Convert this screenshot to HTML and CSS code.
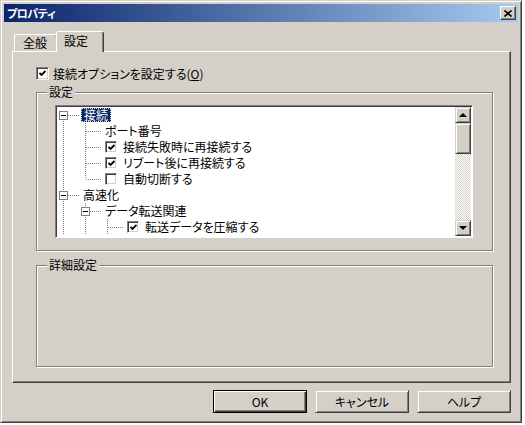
FILE: index.html
```html
<!DOCTYPE html>
<html lang="ja">
<head>
    <meta charset="UTF-8">
    <title>プロパティ</title>
    <link rel="stylesheet" href="styles.css">
</head>
<body>

<div class="window">
    <div class="titlebar">
        <span class="title">プロパティ</span>
        <button class="close">
            <svg width="8" height="7" viewBox="0 0 8 7"><path d="M0.5 0.5 L7.5 6.5 M7.5 0.5 L0.5 6.5" stroke="#000" stroke-width="1.7" fill="none"/></svg>
        </button>
    </div>

    <div class="client">
        <div class="tabs">
            <div class="tab">全般</div>
            <div class="tab active">設定</div>
        </div>

        <div class="panel">
            <label class="check-row">
                <span class="check"><svg width="7" height="7" viewBox="0 0 7 7"><polyline points="0.5,3 2.5,5 6.5,1" stroke="#000" stroke-width="1.8" fill="none"/></svg></span>
                <span>接続オプションを設定する(<u>O</u>)</span>
            </label>

            <div class="group">
                <div class="group-title">設定</div>
                <div class="tree">
                    <div class="tree-rows">
                        <div class="row">
                            <span class="node down"><span class="expander"></span></span>
                            <span class="label selected">接続</span>
                        </div>
                        <div class="row">
                            <span class="guide pipe"></span>
                            <span class="node full"></span>
                            <span class="label">ポート番号</span>
                        </div>
                        <div class="row">
                            <span class="guide pipe"></span>
                            <span class="node full"></span>
                            <span class="tick"><svg width="7" height="7" viewBox="0 0 7 7"><polyline points="0.5,3 2.5,5 6.5,1" stroke="#000" stroke-width="1.8" fill="none"/></svg></span>
                            <span class="label">接続失敗時に再接続する</span>
                        </div>
                        <div class="row">
                            <span class="guide pipe"></span>
                            <span class="node full"></span>
                            <span class="tick"><svg width="7" height="7" viewBox="0 0 7 7"><polyline points="0.5,3 2.5,5 6.5,1" stroke="#000" stroke-width="1.8" fill="none"/></svg></span>
                            <span class="label">リブート後に再接続する</span>
                        </div>
                        <div class="row">
                            <span class="guide pipe"></span>
                            <span class="node up"></span>
                            <span class="tick"></span>
                            <span class="label">自動切断する</span>
                        </div>
                        <div class="row">
                            <span class="node full"><span class="expander"></span></span>
                            <span class="label">高速化</span>
                        </div>
                        <div class="row">
                            <span class="guide pipe"></span>
                            <span class="node full"><span class="expander"></span></span>
                            <span class="label">データ転送関連</span>
                        </div>
                        <div class="row">
                            <span class="guide pipe"></span>
                            <span class="guide pipe"></span>
                            <span class="node full"></span>
                            <span class="tick"><svg width="7" height="7" viewBox="0 0 7 7"><polyline points="0.5,3 2.5,5 6.5,1" stroke="#000" stroke-width="1.8" fill="none"/></svg></span>
                            <span class="label">転送データを圧縮する</span>
                        </div>
                    </div>
                    <div class="vscroll">
                        <div class="sb-btn"><span class="arrow-up"></span></div>
                        <div class="sb-thumb"></div>
                        <div class="sb-track"></div>
                        <div class="sb-btn"><span class="arrow-down"></span></div>
                    </div>
                </div>
            </div>

            <div class="group detail">
                <div class="group-title">詳細設定</div>
            </div>
        </div>

        <div class="buttons">
            <button class="btn default">OK</button>
            <button class="btn">キャンセル</button>
            <button class="btn">ヘルプ</button>
        </div>
    </div>
</div>

</body>
</html>
```

FILE: styles.css
```css
* {
    box-sizing: border-box;
}

body {
    margin: 0;
    background-color: #ffffff;
    font-family: "Noto Sans CJK JP", sans-serif;
    font-size: 12px;
    font-feature-settings: "palt";
    color: #000;
}

.window {
    width: 522px;
    height: 423px;
    background-color: #d4d0c8;
    border: 1px solid;
    border-color: #d4d0c8 #404040 #404040 #d4d0c8;
    box-shadow: inset 1px 1px #ffffff, inset -1px -1px #808080;
    padding: 3px;
}

.titlebar {
    height: 18px;
    display: flex;
    align-items: center;
    justify-content: space-between;
    padding: 0 2px 0 3px;
    background: linear-gradient(to right, #0a246a, #a6caf0);
}

.title {
    color: #ffffff;
    font-weight: bold;
    font-size: 11px;
    letter-spacing: -0.5px;
}

.close {
    width: 16px;
    height: 14px;
    padding: 0;
    display: flex;
    align-items: center;
    justify-content: center;
    background-color: #d4d0c8;
    border: 1px solid;
    border-color: #ffffff #404040 #404040 #ffffff;
    box-shadow: inset -1px -1px #808080;
}

.client {
    padding: 9px 7px 0 8px;
}

/* tabs */
.tabs {
    display: flex;
    align-items: flex-end;
    height: 20px;
    padding-left: 2px;
    position: relative;
    z-index: 1;
}

.tab {
    width: 44px;
    height: 17px;
    padding-left: 8px;
    line-height: 16px;
    background-color: #d4d0c8;
    border: 1px solid;
    border-bottom: 0;
    border-color: #ffffff #404040 transparent #ffffff;
    border-radius: 3px 3px 0 0;
    box-shadow: inset -1px 0 #808080;
}

.tab.active {
    width: 48px;
    height: 21px;
    margin: 0 -2px -1px;
    padding-left: 7px;
    line-height: 17px;
}

.panel {
    width: 499px;
    height: 332px;
    border: 1px solid;
    border-color: #ffffff #404040 #404040 #ffffff;
    box-shadow: inset -1px -1px #808080;
    padding: 15px 0 0 23px;
}

.check-row {
    display: flex;
    align-items: center;
    gap: 4px;
    height: 13px;
}

.check, .tick {
    flex: none;
    width: 13px;
    height: 13px;
    display: flex;
    align-items: center;
    justify-content: center;
    background-color: #ffffff;
    border: 1px solid;
    border-color: #808080 #ffffff #ffffff #808080;
    box-shadow: inset 1px 1px #404040, inset -1px -1px #d4d0c8;
}

/* group boxes */
.group {
    width: 457px;
    height: 159px;
    margin-top: 12px;
    border: 1px solid #808080;
    box-shadow: inset 1px 1px #ffffff, 1px 1px #ffffff;
    padding: 0 19px 12px 18px;
}

.group.detail {
    height: 102px;
    margin-top: 14px;
}

.group-title {
    width: fit-content;
    height: 14px;
    line-height: 14px;
    margin: -8px 0 0 -8px;
    padding: 0 2px;
    background-color: #d4d0c8;
}

/* tree */
.tree {
    margin-top: 6px;
    width: 418px;
    height: 133px;
    display: flex;
    padding: 1px;
    background-color: #ffffff;
    border: 1px solid;
    border-color: #808080 #ffffff #ffffff #808080;
    box-shadow: inset 1px 1px #404040;
}

.tree-rows {
    flex: 1;
    overflow: hidden;
}

.row {
    display: flex;
    align-items: center;
    height: 16px;
    white-space: nowrap;
}

.guide, .node {
    flex: none;
    width: 22px;
    height: 16px;
    background-repeat: no-repeat;
}

.guide.pipe {
    background-image: repeating-linear-gradient(to bottom, #808080 0 1px, transparent 1px 2px);
    background-size: 1px 16px;
    background-position: 6px 0;
}

.node {
    display: flex;
    align-items: center;
    padding-left: 2px;
    margin-right: 2px;
    --v: repeating-linear-gradient(to bottom, #808080 0 1px, transparent 1px 2px);
    --h: repeating-linear-gradient(to right, #808080 0 1px, transparent 1px 2px);
}

.node.full {
    background-image: var(--h), var(--v);
    background-size: 15px 1px, 1px 16px;
    background-position: 7px 8px, 6px 0;
}

.node.up {
    background-image: var(--h), var(--v);
    background-size: 15px 1px, 1px 8px;
    background-position: 7px 8px, 6px 0;
}

.node.down {
    background-image: var(--h), var(--v);
    background-size: 15px 1px, 1px 8px;
    background-position: 7px 8px, 6px 8px;
}

.expander {
    width: 9px;
    height: 9px;
    border: 1px solid #808080;
    background: linear-gradient(#000, #000) no-repeat center / 5px 1px, #ffffff;
}

.tick {
    width: 12px;
    height: 12px;
    margin: 0 4px 0 2px;
}

.label {
    height: 14px;
    line-height: 14px;
    padding: 0 2px;
}

.label.selected {
    padding: 0 3px;
    background-color: #0a246a;
    color: #ffffff;
    outline: 1px dotted #d8d8a8;
    outline-offset: -1px;
}

/* scrollbar */
.vscroll {
    width: 16px;
    display: flex;
    flex-direction: column;
}

.sb-btn, .sb-thumb, .btn {
    background-color: #d4d0c8;
    border: 1px solid;
    border-color: #d4d0c8 #404040 #404040 #d4d0c8;
    box-shadow: inset 1px 1px #ffffff, inset -1px -1px #808080;
}

.sb-btn {
    height: 16px;
    display: flex;
    align-items: center;
    justify-content: center;
}

.sb-thumb {
    height: 31px;
}

.sb-track {
    flex: 1;
    background-color: #ffffff;
    background-image: conic-gradient(#d4d0c8 25%, #ffffff 0 50%, #d4d0c8 0 75%, #ffffff 0);
    background-size: 2px 2px;
}

.arrow-up {
    border-left: 4px solid transparent;
    border-right: 4px solid transparent;
    border-bottom: 4px solid #000;
}

.arrow-down {
    border-left: 4px solid transparent;
    border-right: 4px solid transparent;
    border-top: 4px solid #000;
}

/* dialog buttons */
.buttons {
    display: flex;
    justify-content: flex-end;
    gap: 8px;
    margin-top: 7px;
}

.btn {
    width: 94px;
    height: 23px;
    padding: 0;
    font-family: "Noto Sans CJK JP", sans-serif;
    font-size: 12px;
    font-feature-settings: "palt";
    color: #000;
}

.btn.default {
    border-color: #000;
    box-shadow: inset 1px 1px #ffffff, inset -1px -1px #404040, inset -2px -2px #808080;
}
```
